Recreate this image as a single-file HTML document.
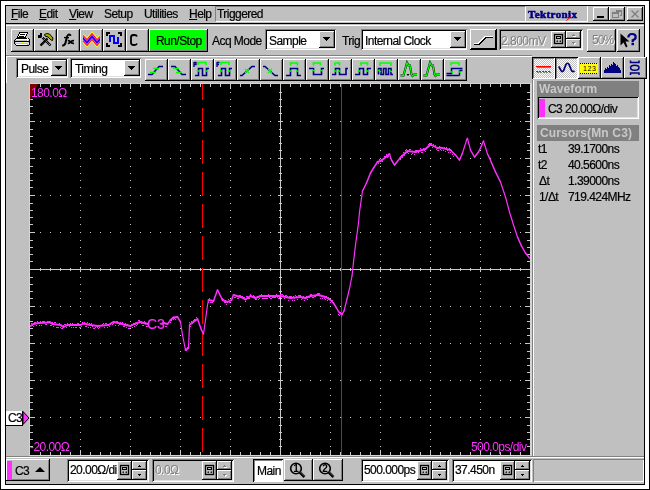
<!DOCTYPE html><html><head><meta charset="utf-8"><style>
html,body{margin:0;padding:0;}
body{width:650px;height:490px;position:relative;overflow:hidden;background:#fff;font-family:"Liberation Sans", sans-serif;}
.a{position:absolute;box-sizing:border-box;}
.t{white-space:nowrap;line-height:1;will-change:transform;-webkit-text-stroke:0.2px currentColor;}
.rb{box-shadow:inset -1px -1px #000, inset 1px 1px #fff, inset -2px -2px #808080;}
.rb2{box-shadow:inset -1px -1px #000, inset 1px 1px #fff, inset -2px -2px #000;}
.pb{box-shadow:inset 1px 1px #000, inset -1px -1px #fff, inset 2px 2px #808080;}
.sk{box-shadow:inset 1px 1px #808080, inset -1px -1px #fff, inset 2px 2px #000, inset -2px -2px #dfdfdf;}
.sk1{box-shadow:inset 1px 1px #808080, inset -1px -1px #fff;}
svg{overflow:visible}
</style></head><body>

<div class="a" style="left:0px;top:0px;width:650px;height:490px;background:#fff;border:1px solid #000;"></div>
<div class="a" style="left:5px;top:5px;width:640px;height:480px;background:#c0c0c0;border:1px solid #000;"></div>
<div class="a t" style="left:11px;top:8px;font-size:12px;color:#000;font-weight:normal;font-family:'Liberation Sans', sans-serif;letter-spacing:-0.55px;"><u>F</u>ile</div>
<div class="a t" style="left:39px;top:8px;font-size:12px;color:#000;font-weight:normal;font-family:'Liberation Sans', sans-serif;letter-spacing:-0.55px;"><u>E</u>dit</div>
<div class="a t" style="left:69px;top:8px;font-size:12px;color:#000;font-weight:normal;font-family:'Liberation Sans', sans-serif;letter-spacing:-0.55px;"><u>V</u>iew</div>
<div class="a t" style="left:104px;top:8px;font-size:12px;color:#000;font-weight:normal;font-family:'Liberation Sans', sans-serif;letter-spacing:-0.55px;">Setup</div>
<div class="a t" style="left:144px;top:8px;font-size:12px;color:#000;font-weight:normal;font-family:'Liberation Sans', sans-serif;letter-spacing:-0.55px;">Utilities</div>
<div class="a t" style="left:189px;top:8px;font-size:12px;color:#000;font-weight:normal;font-family:'Liberation Sans', sans-serif;letter-spacing:-0.55px;"><u>H</u>elp</div>
<div class="a" style="left:215px;top:6px;width:311px;height:16px;background:#c0c0c0;border-top:1px solid #808080;border-left:1px solid #808080;border-right:1px solid #fff;border-bottom:1px solid #fff;"></div>
<div class="a t" style="left:217px;top:8px;font-size:12px;color:#000;font-weight:normal;font-family:'Liberation Sans', sans-serif;letter-spacing:-0.55px;">Triggered</div>
<div class="a" style="left:526px;top:6px;width:62px;height:16px;background:#c0c0c0;border-right:1px solid #fff;border-bottom:1px solid #fff;"></div>
<div class="a t" style="left:528px;top:9px;font-size:11px;color:#000080;font-weight:bold;font-family:'Liberation Serif', serif;letter-spacing:0.4px;-webkit-text-stroke:0.6px #000080;">Tektronix</div>
<svg class="a" style="left:0px;top:0px" width="650" height="30"><line x1="566.5" y1="20.5" x2="571" y2="16.5" stroke="#f00" stroke-width="1"/></svg>
<div class="a rb" style="left:593px;top:7px;width:16px;height:14px;background:#c0c0c0"></div>
<div class="a" style="left:597px;top:16px;width:7px;height:2px;background:#000;"></div>
<div class="a rb" style="left:609px;top:7px;width:16px;height:14px;background:#c0c0c0"></div>
<div class="a rb" style="left:627px;top:7px;width:16px;height:14px;background:#c0c0c0"></div>
<svg class="a" style="left:609px;top:7px" width="16" height="14" shape-rendering="crispEdges"><path d="M6.5 3.5h6v5h-2M6.5 4.5h6" stroke="#808080" fill="none"/><rect x="3.5" y="5.5" width="6" height="5" stroke="#808080" fill="none"/><line x1="3.5" y1="6.5" x2="9.5" y2="6.5" stroke="#808080"/><path d="M7 3.5V5" stroke="#808080"/></svg>
<svg class="a" style="left:627px;top:7px" width="16" height="14"><path d="M4.5 3.5L11.5 10.5M11.5 3.5L4.5 10.5" stroke="#808080" stroke-width="1.4" fill="none"/></svg>
<div class="a" style="left:6px;top:23px;width:638px;height:1px;background:#000;"></div>
<div class="a" style="left:6px;top:25px;width:638px;height:1px;background:#fff;"></div>
<div class="a" style="left:6px;top:26px;width:1px;height:29px;background:#dfdfdf;"></div>
<div class="a" style="left:6px;top:55px;width:526px;height:1px;background:#808080;"></div>
<div class="a" style="left:6px;top:56px;width:526px;height:1px;background:#fff;"></div>
<div class="a" style="left:6px;top:57px;width:1px;height:26px;background:#fff;"></div>
<div class="a rb" style="left:11px;top:29px;width:23px;height:23px;background:#c0c0c0"></div>
<div class="a rb" style="left:34px;top:29px;width:23px;height:23px;background:#c0c0c0"></div>
<div class="a rb" style="left:57px;top:29px;width:23px;height:23px;background:#c0c0c0"></div>
<div class="a rb" style="left:80px;top:29px;width:23px;height:23px;background:#c0c0c0"></div>
<div class="a rb" style="left:103px;top:29px;width:23px;height:23px;background:#c0c0c0"></div>
<div class="a rb" style="left:126px;top:29px;width:23px;height:23px;background:#c0c0c0"></div>
<div class="a rb" style="left:149px;top:29px;width:59px;height:23px;background:#00ff00"></div>
<div class="a t" style="left:156px;top:35px;font-size:12px;color:#000;font-weight:normal;font-family:'Liberation Sans', sans-serif;letter-spacing:-0.55px;">Run/Stop</div>
<div class="a t" style="left:212px;top:35px;font-size:12px;color:#000;font-weight:normal;font-family:'Liberation Sans', sans-serif;letter-spacing:-0.55px;">Acq Mode</div>
<div class="a sk" style="left:265px;top:29px;width:71px;height:21px;background:#fff"></div>
<div class="a t" style="left:269px;top:35px;font-size:12px;color:#000;font-weight:normal;font-family:'Liberation Sans', sans-serif;letter-spacing:-0.55px;">Sample</div>
<div class="a rb" style="left:319px;top:31px;width:16px;height:17px;background:#c0c0c0"></div>
<svg class="a" style="left:323px;top:37px" width="7" height="4" shape-rendering="crispEdges"><path d="M0 0H7V1H6V2H5V3H4V4H3V3H2V2H1V1H0Z" fill="#000"/></svg>
<div class="a t" style="left:342px;top:35px;font-size:12px;color:#000;font-weight:normal;font-family:'Liberation Sans', sans-serif;letter-spacing:-0.55px;">Trig</div>
<div class="a sk" style="left:361px;top:29px;width:106px;height:21px;background:#fff"></div>
<div class="a t" style="left:365px;top:35px;font-size:12px;color:#000;font-weight:normal;font-family:'Liberation Sans', sans-serif;letter-spacing:-0.55px;">Internal Clock</div>
<div class="a rb" style="left:450px;top:31px;width:16px;height:17px;background:#c0c0c0"></div>
<svg class="a" style="left:454px;top:37px" width="7" height="4" shape-rendering="crispEdges"><path d="M0 0H7V1H6V2H5V3H4V4H3V3H2V2H1V1H0Z" fill="#000"/></svg>
<div class="a rb2" style="left:470px;top:29px;width:27px;height:21px;background:#c0c0c0"></div>
<div class="a sk" style="left:499px;top:29px;width:84px;height:21px;background:#c0c0c0"></div>
<div class="a t" style="left:501px;top:35px;font-size:12px;color:#808080;font-weight:normal;font-family:'Liberation Sans', sans-serif;letter-spacing:-0.5px;text-shadow:1px 1px #fff;-webkit-text-stroke:0;">2.800mV</div>
<div class="a rb" style="left:551px;top:31px;width:15px;height:17px;background:#c0c0c0"></div>
<div class="a rb" style="left:566px;top:31px;width:15px;height:8px;background:#c0c0c0"></div>
<div class="a rb" style="left:566px;top:39px;width:15px;height:9px;background:#c0c0c0"></div>
<div class="a rb" style="left:587px;top:29px;width:29px;height:23px;background:#c0c0c0"></div>
<div class="a t" style="left:592px;top:34px;font-size:12px;color:#808080;font-weight:normal;font-family:'Liberation Sans', sans-serif;letter-spacing:-0.9px;text-shadow:1px 1px #fff;-webkit-text-stroke:0;">50%</div>
<div class="a rb" style="left:617px;top:29px;width:23px;height:23px;background:#c0c0c0"></div>
<div class="a sk" style="left:16px;top:58px;width:52px;height:20px;background:#fff"></div>
<div class="a t" style="left:21px;top:63px;font-size:12px;color:#000;font-weight:normal;font-family:'Liberation Sans', sans-serif;letter-spacing:-0.55px;">Pulse</div>
<div class="a rb" style="left:51px;top:60px;width:16px;height:16px;background:#c0c0c0"></div>
<svg class="a" style="left:55px;top:66px" width="7" height="4" shape-rendering="crispEdges"><path d="M0 0H7V1H6V2H5V3H4V4H3V3H2V2H1V1H0Z" fill="#000"/></svg>
<div class="a sk" style="left:70px;top:58px;width:71px;height:20px;background:#fff"></div>
<div class="a t" style="left:75px;top:63px;font-size:12px;color:#000;font-weight:normal;font-family:'Liberation Sans', sans-serif;letter-spacing:-0.55px;">Timing</div>
<div class="a rb" style="left:124px;top:60px;width:16px;height:16px;background:#c0c0c0"></div>
<svg class="a" style="left:128px;top:66px" width="7" height="4" shape-rendering="crispEdges"><path d="M0 0H7V1H6V2H5V3H4V4H3V3H2V2H1V1H0Z" fill="#000"/></svg>
<div class="a rb" style="left:145px;top:59px;width:23px;height:22px;background:#c0c0c0"></div>
<div class="a rb" style="left:168px;top:59px;width:23px;height:22px;background:#c0c0c0"></div>
<div class="a rb" style="left:191px;top:59px;width:23px;height:22px;background:#c0c0c0"></div>
<div class="a rb" style="left:214px;top:59px;width:23px;height:22px;background:#c0c0c0"></div>
<div class="a rb" style="left:237px;top:59px;width:23px;height:22px;background:#c0c0c0"></div>
<div class="a rb" style="left:260px;top:59px;width:23px;height:22px;background:#c0c0c0"></div>
<div class="a rb" style="left:283px;top:59px;width:23px;height:22px;background:#c0c0c0"></div>
<div class="a rb" style="left:306px;top:59px;width:23px;height:22px;background:#c0c0c0"></div>
<div class="a rb" style="left:329px;top:59px;width:23px;height:22px;background:#c0c0c0"></div>
<div class="a rb" style="left:352px;top:59px;width:23px;height:22px;background:#c0c0c0"></div>
<div class="a rb" style="left:375px;top:59px;width:23px;height:22px;background:#c0c0c0"></div>
<div class="a rb" style="left:398px;top:59px;width:23px;height:22px;background:#c0c0c0"></div>
<div class="a rb" style="left:421px;top:59px;width:23px;height:22px;background:#c0c0c0"></div>
<div class="a rb" style="left:444px;top:59px;width:23px;height:22px;background:#c0c0c0"></div>
<div class="a pb" style="left:532px;top:57px;width:23px;height:22px;background:repeating-conic-gradient(#fff 0% 25%, #c0c0c0 0% 50%) 0 0/2px 2px"></div>
<div class="a pb" style="left:555px;top:57px;width:23px;height:22px;background:repeating-conic-gradient(#fff 0% 25%, #c0c0c0 0% 50%) 0 0/2px 2px"></div>
<div class="a rb" style="left:578px;top:57px;width:23px;height:22px;background:#c0c0c0"></div>
<div class="a rb" style="left:601px;top:57px;width:23px;height:22px;background:#c0c0c0"></div>
<div class="a rb" style="left:624px;top:57px;width:23px;height:22px;background:#c0c0c0"></div>
<svg class="a" style="left:0;top:0" width="650" height="490" shape-rendering="crispEdges"><rect x="29" y="83" width="503" height="373" fill="#d4d4d4"/><rect x="30" y="84" width="500" height="371" fill="#000"/><path d="M80 92h1v1h-1zM80 99h1v1h-1zM80 106h1v1h-1zM80 113h1v1h-1zM80 129h1v1h-1zM80 136h1v1h-1zM80 143h1v1h-1zM80 150h1v1h-1zM80 166h1v1h-1zM80 173h1v1h-1zM80 180h1v1h-1zM80 187h1v1h-1zM80 203h1v1h-1zM80 210h1v1h-1zM80 217h1v1h-1zM80 224h1v1h-1zM80 240h1v1h-1zM80 247h1v1h-1zM80 254h1v1h-1zM80 261h1v1h-1zM80 277h1v1h-1zM80 284h1v1h-1zM80 291h1v1h-1zM80 298h1v1h-1zM80 314h1v1h-1zM80 321h1v1h-1zM80 328h1v1h-1zM80 335h1v1h-1zM80 351h1v1h-1zM80 358h1v1h-1zM80 365h1v1h-1zM80 372h1v1h-1zM80 388h1v1h-1zM80 395h1v1h-1zM80 402h1v1h-1zM80 409h1v1h-1zM80 425h1v1h-1zM80 432h1v1h-1zM80 439h1v1h-1zM80 446h1v1h-1zM80 121h1v1h-1zM80 158h1v1h-1zM80 195h1v1h-1zM80 232h1v1h-1zM80 269h1v1h-1zM80 306h1v1h-1zM80 343h1v1h-1zM80 380h1v1h-1zM80 417h1v1h-1zM130 92h1v1h-1zM130 99h1v1h-1zM130 106h1v1h-1zM130 113h1v1h-1zM130 129h1v1h-1zM130 136h1v1h-1zM130 143h1v1h-1zM130 150h1v1h-1zM130 166h1v1h-1zM130 173h1v1h-1zM130 180h1v1h-1zM130 187h1v1h-1zM130 203h1v1h-1zM130 210h1v1h-1zM130 217h1v1h-1zM130 224h1v1h-1zM130 240h1v1h-1zM130 247h1v1h-1zM130 254h1v1h-1zM130 261h1v1h-1zM130 277h1v1h-1zM130 284h1v1h-1zM130 291h1v1h-1zM130 298h1v1h-1zM130 314h1v1h-1zM130 321h1v1h-1zM130 328h1v1h-1zM130 335h1v1h-1zM130 351h1v1h-1zM130 358h1v1h-1zM130 365h1v1h-1zM130 372h1v1h-1zM130 388h1v1h-1zM130 395h1v1h-1zM130 402h1v1h-1zM130 409h1v1h-1zM130 425h1v1h-1zM130 432h1v1h-1zM130 439h1v1h-1zM130 446h1v1h-1zM130 121h1v1h-1zM130 158h1v1h-1zM130 195h1v1h-1zM130 232h1v1h-1zM130 269h1v1h-1zM130 306h1v1h-1zM130 343h1v1h-1zM130 380h1v1h-1zM130 417h1v1h-1zM180 92h1v1h-1zM180 99h1v1h-1zM180 106h1v1h-1zM180 113h1v1h-1zM180 129h1v1h-1zM180 136h1v1h-1zM180 143h1v1h-1zM180 150h1v1h-1zM180 166h1v1h-1zM180 173h1v1h-1zM180 180h1v1h-1zM180 187h1v1h-1zM180 203h1v1h-1zM180 210h1v1h-1zM180 217h1v1h-1zM180 224h1v1h-1zM180 240h1v1h-1zM180 247h1v1h-1zM180 254h1v1h-1zM180 261h1v1h-1zM180 277h1v1h-1zM180 284h1v1h-1zM180 291h1v1h-1zM180 298h1v1h-1zM180 314h1v1h-1zM180 321h1v1h-1zM180 328h1v1h-1zM180 335h1v1h-1zM180 351h1v1h-1zM180 358h1v1h-1zM180 365h1v1h-1zM180 372h1v1h-1zM180 388h1v1h-1zM180 395h1v1h-1zM180 402h1v1h-1zM180 409h1v1h-1zM180 425h1v1h-1zM180 432h1v1h-1zM180 439h1v1h-1zM180 446h1v1h-1zM180 121h1v1h-1zM180 158h1v1h-1zM180 195h1v1h-1zM180 232h1v1h-1zM180 269h1v1h-1zM180 306h1v1h-1zM180 343h1v1h-1zM180 380h1v1h-1zM180 417h1v1h-1zM230 92h1v1h-1zM230 99h1v1h-1zM230 106h1v1h-1zM230 113h1v1h-1zM230 129h1v1h-1zM230 136h1v1h-1zM230 143h1v1h-1zM230 150h1v1h-1zM230 166h1v1h-1zM230 173h1v1h-1zM230 180h1v1h-1zM230 187h1v1h-1zM230 203h1v1h-1zM230 210h1v1h-1zM230 217h1v1h-1zM230 224h1v1h-1zM230 240h1v1h-1zM230 247h1v1h-1zM230 254h1v1h-1zM230 261h1v1h-1zM230 277h1v1h-1zM230 284h1v1h-1zM230 291h1v1h-1zM230 298h1v1h-1zM230 314h1v1h-1zM230 321h1v1h-1zM230 328h1v1h-1zM230 335h1v1h-1zM230 351h1v1h-1zM230 358h1v1h-1zM230 365h1v1h-1zM230 372h1v1h-1zM230 388h1v1h-1zM230 395h1v1h-1zM230 402h1v1h-1zM230 409h1v1h-1zM230 425h1v1h-1zM230 432h1v1h-1zM230 439h1v1h-1zM230 446h1v1h-1zM230 121h1v1h-1zM230 158h1v1h-1zM230 195h1v1h-1zM230 232h1v1h-1zM230 269h1v1h-1zM230 306h1v1h-1zM230 343h1v1h-1zM230 380h1v1h-1zM230 417h1v1h-1zM330 92h1v1h-1zM330 99h1v1h-1zM330 106h1v1h-1zM330 113h1v1h-1zM330 129h1v1h-1zM330 136h1v1h-1zM330 143h1v1h-1zM330 150h1v1h-1zM330 166h1v1h-1zM330 173h1v1h-1zM330 180h1v1h-1zM330 187h1v1h-1zM330 203h1v1h-1zM330 210h1v1h-1zM330 217h1v1h-1zM330 224h1v1h-1zM330 240h1v1h-1zM330 247h1v1h-1zM330 254h1v1h-1zM330 261h1v1h-1zM330 277h1v1h-1zM330 284h1v1h-1zM330 291h1v1h-1zM330 298h1v1h-1zM330 314h1v1h-1zM330 321h1v1h-1zM330 328h1v1h-1zM330 335h1v1h-1zM330 351h1v1h-1zM330 358h1v1h-1zM330 365h1v1h-1zM330 372h1v1h-1zM330 388h1v1h-1zM330 395h1v1h-1zM330 402h1v1h-1zM330 409h1v1h-1zM330 425h1v1h-1zM330 432h1v1h-1zM330 439h1v1h-1zM330 446h1v1h-1zM330 121h1v1h-1zM330 158h1v1h-1zM330 195h1v1h-1zM330 232h1v1h-1zM330 269h1v1h-1zM330 306h1v1h-1zM330 343h1v1h-1zM330 380h1v1h-1zM330 417h1v1h-1zM380 92h1v1h-1zM380 99h1v1h-1zM380 106h1v1h-1zM380 113h1v1h-1zM380 129h1v1h-1zM380 136h1v1h-1zM380 143h1v1h-1zM380 150h1v1h-1zM380 166h1v1h-1zM380 173h1v1h-1zM380 180h1v1h-1zM380 187h1v1h-1zM380 203h1v1h-1zM380 210h1v1h-1zM380 217h1v1h-1zM380 224h1v1h-1zM380 240h1v1h-1zM380 247h1v1h-1zM380 254h1v1h-1zM380 261h1v1h-1zM380 277h1v1h-1zM380 284h1v1h-1zM380 291h1v1h-1zM380 298h1v1h-1zM380 314h1v1h-1zM380 321h1v1h-1zM380 328h1v1h-1zM380 335h1v1h-1zM380 351h1v1h-1zM380 358h1v1h-1zM380 365h1v1h-1zM380 372h1v1h-1zM380 388h1v1h-1zM380 395h1v1h-1zM380 402h1v1h-1zM380 409h1v1h-1zM380 425h1v1h-1zM380 432h1v1h-1zM380 439h1v1h-1zM380 446h1v1h-1zM380 121h1v1h-1zM380 158h1v1h-1zM380 195h1v1h-1zM380 232h1v1h-1zM380 269h1v1h-1zM380 306h1v1h-1zM380 343h1v1h-1zM380 380h1v1h-1zM380 417h1v1h-1zM430 92h1v1h-1zM430 99h1v1h-1zM430 106h1v1h-1zM430 113h1v1h-1zM430 129h1v1h-1zM430 136h1v1h-1zM430 143h1v1h-1zM430 150h1v1h-1zM430 166h1v1h-1zM430 173h1v1h-1zM430 180h1v1h-1zM430 187h1v1h-1zM430 203h1v1h-1zM430 210h1v1h-1zM430 217h1v1h-1zM430 224h1v1h-1zM430 240h1v1h-1zM430 247h1v1h-1zM430 254h1v1h-1zM430 261h1v1h-1zM430 277h1v1h-1zM430 284h1v1h-1zM430 291h1v1h-1zM430 298h1v1h-1zM430 314h1v1h-1zM430 321h1v1h-1zM430 328h1v1h-1zM430 335h1v1h-1zM430 351h1v1h-1zM430 358h1v1h-1zM430 365h1v1h-1zM430 372h1v1h-1zM430 388h1v1h-1zM430 395h1v1h-1zM430 402h1v1h-1zM430 409h1v1h-1zM430 425h1v1h-1zM430 432h1v1h-1zM430 439h1v1h-1zM430 446h1v1h-1zM430 121h1v1h-1zM430 158h1v1h-1zM430 195h1v1h-1zM430 232h1v1h-1zM430 269h1v1h-1zM430 306h1v1h-1zM430 343h1v1h-1zM430 380h1v1h-1zM430 417h1v1h-1zM480 92h1v1h-1zM480 99h1v1h-1zM480 106h1v1h-1zM480 113h1v1h-1zM480 129h1v1h-1zM480 136h1v1h-1zM480 143h1v1h-1zM480 150h1v1h-1zM480 166h1v1h-1zM480 173h1v1h-1zM480 180h1v1h-1zM480 187h1v1h-1zM480 203h1v1h-1zM480 210h1v1h-1zM480 217h1v1h-1zM480 224h1v1h-1zM480 240h1v1h-1zM480 247h1v1h-1zM480 254h1v1h-1zM480 261h1v1h-1zM480 277h1v1h-1zM480 284h1v1h-1zM480 291h1v1h-1zM480 298h1v1h-1zM480 314h1v1h-1zM480 321h1v1h-1zM480 328h1v1h-1zM480 335h1v1h-1zM480 351h1v1h-1zM480 358h1v1h-1zM480 365h1v1h-1zM480 372h1v1h-1zM480 388h1v1h-1zM480 395h1v1h-1zM480 402h1v1h-1zM480 409h1v1h-1zM480 425h1v1h-1zM480 432h1v1h-1zM480 439h1v1h-1zM480 446h1v1h-1zM480 121h1v1h-1zM480 158h1v1h-1zM480 195h1v1h-1zM480 232h1v1h-1zM480 269h1v1h-1zM480 306h1v1h-1zM480 343h1v1h-1zM480 380h1v1h-1zM480 417h1v1h-1zM40 121h1v1h-1zM50 121h1v1h-1zM60 121h1v1h-1zM70 121h1v1h-1zM90 121h1v1h-1zM100 121h1v1h-1zM110 121h1v1h-1zM120 121h1v1h-1zM140 121h1v1h-1zM150 121h1v1h-1zM160 121h1v1h-1zM170 121h1v1h-1zM190 121h1v1h-1zM200 121h1v1h-1zM210 121h1v1h-1zM220 121h1v1h-1zM240 121h1v1h-1zM250 121h1v1h-1zM260 121h1v1h-1zM270 121h1v1h-1zM290 121h1v1h-1zM300 121h1v1h-1zM310 121h1v1h-1zM320 121h1v1h-1zM340 121h1v1h-1zM350 121h1v1h-1zM360 121h1v1h-1zM370 121h1v1h-1zM390 121h1v1h-1zM400 121h1v1h-1zM410 121h1v1h-1zM420 121h1v1h-1zM440 121h1v1h-1zM450 121h1v1h-1zM460 121h1v1h-1zM470 121h1v1h-1zM490 121h1v1h-1zM500 121h1v1h-1zM510 121h1v1h-1zM520 121h1v1h-1zM80 121h1v1h-1zM130 121h1v1h-1zM180 121h1v1h-1zM230 121h1v1h-1zM280 121h1v1h-1zM330 121h1v1h-1zM380 121h1v1h-1zM430 121h1v1h-1zM480 121h1v1h-1zM40 158h1v1h-1zM50 158h1v1h-1zM60 158h1v1h-1zM70 158h1v1h-1zM90 158h1v1h-1zM100 158h1v1h-1zM110 158h1v1h-1zM120 158h1v1h-1zM140 158h1v1h-1zM150 158h1v1h-1zM160 158h1v1h-1zM170 158h1v1h-1zM190 158h1v1h-1zM200 158h1v1h-1zM210 158h1v1h-1zM220 158h1v1h-1zM240 158h1v1h-1zM250 158h1v1h-1zM260 158h1v1h-1zM270 158h1v1h-1zM290 158h1v1h-1zM300 158h1v1h-1zM310 158h1v1h-1zM320 158h1v1h-1zM340 158h1v1h-1zM350 158h1v1h-1zM360 158h1v1h-1zM370 158h1v1h-1zM390 158h1v1h-1zM400 158h1v1h-1zM410 158h1v1h-1zM420 158h1v1h-1zM440 158h1v1h-1zM450 158h1v1h-1zM460 158h1v1h-1zM470 158h1v1h-1zM490 158h1v1h-1zM500 158h1v1h-1zM510 158h1v1h-1zM520 158h1v1h-1zM80 158h1v1h-1zM130 158h1v1h-1zM180 158h1v1h-1zM230 158h1v1h-1zM280 158h1v1h-1zM330 158h1v1h-1zM380 158h1v1h-1zM430 158h1v1h-1zM480 158h1v1h-1zM40 195h1v1h-1zM50 195h1v1h-1zM60 195h1v1h-1zM70 195h1v1h-1zM90 195h1v1h-1zM100 195h1v1h-1zM110 195h1v1h-1zM120 195h1v1h-1zM140 195h1v1h-1zM150 195h1v1h-1zM160 195h1v1h-1zM170 195h1v1h-1zM190 195h1v1h-1zM200 195h1v1h-1zM210 195h1v1h-1zM220 195h1v1h-1zM240 195h1v1h-1zM250 195h1v1h-1zM260 195h1v1h-1zM270 195h1v1h-1zM290 195h1v1h-1zM300 195h1v1h-1zM310 195h1v1h-1zM320 195h1v1h-1zM340 195h1v1h-1zM350 195h1v1h-1zM360 195h1v1h-1zM370 195h1v1h-1zM390 195h1v1h-1zM400 195h1v1h-1zM410 195h1v1h-1zM420 195h1v1h-1zM440 195h1v1h-1zM450 195h1v1h-1zM460 195h1v1h-1zM470 195h1v1h-1zM490 195h1v1h-1zM500 195h1v1h-1zM510 195h1v1h-1zM520 195h1v1h-1zM80 195h1v1h-1zM130 195h1v1h-1zM180 195h1v1h-1zM230 195h1v1h-1zM280 195h1v1h-1zM330 195h1v1h-1zM380 195h1v1h-1zM430 195h1v1h-1zM480 195h1v1h-1zM40 232h1v1h-1zM50 232h1v1h-1zM60 232h1v1h-1zM70 232h1v1h-1zM90 232h1v1h-1zM100 232h1v1h-1zM110 232h1v1h-1zM120 232h1v1h-1zM140 232h1v1h-1zM150 232h1v1h-1zM160 232h1v1h-1zM170 232h1v1h-1zM190 232h1v1h-1zM200 232h1v1h-1zM210 232h1v1h-1zM220 232h1v1h-1zM240 232h1v1h-1zM250 232h1v1h-1zM260 232h1v1h-1zM270 232h1v1h-1zM290 232h1v1h-1zM300 232h1v1h-1zM310 232h1v1h-1zM320 232h1v1h-1zM340 232h1v1h-1zM350 232h1v1h-1zM360 232h1v1h-1zM370 232h1v1h-1zM390 232h1v1h-1zM400 232h1v1h-1zM410 232h1v1h-1zM420 232h1v1h-1zM440 232h1v1h-1zM450 232h1v1h-1zM460 232h1v1h-1zM470 232h1v1h-1zM490 232h1v1h-1zM500 232h1v1h-1zM510 232h1v1h-1zM520 232h1v1h-1zM80 232h1v1h-1zM130 232h1v1h-1zM180 232h1v1h-1zM230 232h1v1h-1zM280 232h1v1h-1zM330 232h1v1h-1zM380 232h1v1h-1zM430 232h1v1h-1zM480 232h1v1h-1zM40 306h1v1h-1zM50 306h1v1h-1zM60 306h1v1h-1zM70 306h1v1h-1zM90 306h1v1h-1zM100 306h1v1h-1zM110 306h1v1h-1zM120 306h1v1h-1zM140 306h1v1h-1zM150 306h1v1h-1zM160 306h1v1h-1zM170 306h1v1h-1zM190 306h1v1h-1zM200 306h1v1h-1zM210 306h1v1h-1zM220 306h1v1h-1zM240 306h1v1h-1zM250 306h1v1h-1zM260 306h1v1h-1zM270 306h1v1h-1zM290 306h1v1h-1zM300 306h1v1h-1zM310 306h1v1h-1zM320 306h1v1h-1zM340 306h1v1h-1zM350 306h1v1h-1zM360 306h1v1h-1zM370 306h1v1h-1zM390 306h1v1h-1zM400 306h1v1h-1zM410 306h1v1h-1zM420 306h1v1h-1zM440 306h1v1h-1zM450 306h1v1h-1zM460 306h1v1h-1zM470 306h1v1h-1zM490 306h1v1h-1zM500 306h1v1h-1zM510 306h1v1h-1zM520 306h1v1h-1zM80 306h1v1h-1zM130 306h1v1h-1zM180 306h1v1h-1zM230 306h1v1h-1zM280 306h1v1h-1zM330 306h1v1h-1zM380 306h1v1h-1zM430 306h1v1h-1zM480 306h1v1h-1zM40 343h1v1h-1zM50 343h1v1h-1zM60 343h1v1h-1zM70 343h1v1h-1zM90 343h1v1h-1zM100 343h1v1h-1zM110 343h1v1h-1zM120 343h1v1h-1zM140 343h1v1h-1zM150 343h1v1h-1zM160 343h1v1h-1zM170 343h1v1h-1zM190 343h1v1h-1zM200 343h1v1h-1zM210 343h1v1h-1zM220 343h1v1h-1zM240 343h1v1h-1zM250 343h1v1h-1zM260 343h1v1h-1zM270 343h1v1h-1zM290 343h1v1h-1zM300 343h1v1h-1zM310 343h1v1h-1zM320 343h1v1h-1zM340 343h1v1h-1zM350 343h1v1h-1zM360 343h1v1h-1zM370 343h1v1h-1zM390 343h1v1h-1zM400 343h1v1h-1zM410 343h1v1h-1zM420 343h1v1h-1zM440 343h1v1h-1zM450 343h1v1h-1zM460 343h1v1h-1zM470 343h1v1h-1zM490 343h1v1h-1zM500 343h1v1h-1zM510 343h1v1h-1zM520 343h1v1h-1zM80 343h1v1h-1zM130 343h1v1h-1zM180 343h1v1h-1zM230 343h1v1h-1zM280 343h1v1h-1zM330 343h1v1h-1zM380 343h1v1h-1zM430 343h1v1h-1zM480 343h1v1h-1zM40 380h1v1h-1zM50 380h1v1h-1zM60 380h1v1h-1zM70 380h1v1h-1zM90 380h1v1h-1zM100 380h1v1h-1zM110 380h1v1h-1zM120 380h1v1h-1zM140 380h1v1h-1zM150 380h1v1h-1zM160 380h1v1h-1zM170 380h1v1h-1zM190 380h1v1h-1zM200 380h1v1h-1zM210 380h1v1h-1zM220 380h1v1h-1zM240 380h1v1h-1zM250 380h1v1h-1zM260 380h1v1h-1zM270 380h1v1h-1zM290 380h1v1h-1zM300 380h1v1h-1zM310 380h1v1h-1zM320 380h1v1h-1zM340 380h1v1h-1zM350 380h1v1h-1zM360 380h1v1h-1zM370 380h1v1h-1zM390 380h1v1h-1zM400 380h1v1h-1zM410 380h1v1h-1zM420 380h1v1h-1zM440 380h1v1h-1zM450 380h1v1h-1zM460 380h1v1h-1zM470 380h1v1h-1zM490 380h1v1h-1zM500 380h1v1h-1zM510 380h1v1h-1zM520 380h1v1h-1zM80 380h1v1h-1zM130 380h1v1h-1zM180 380h1v1h-1zM230 380h1v1h-1zM280 380h1v1h-1zM330 380h1v1h-1zM380 380h1v1h-1zM430 380h1v1h-1zM480 380h1v1h-1zM40 417h1v1h-1zM50 417h1v1h-1zM60 417h1v1h-1zM70 417h1v1h-1zM90 417h1v1h-1zM100 417h1v1h-1zM110 417h1v1h-1zM120 417h1v1h-1zM140 417h1v1h-1zM150 417h1v1h-1zM160 417h1v1h-1zM170 417h1v1h-1zM190 417h1v1h-1zM200 417h1v1h-1zM210 417h1v1h-1zM220 417h1v1h-1zM240 417h1v1h-1zM250 417h1v1h-1zM260 417h1v1h-1zM270 417h1v1h-1zM290 417h1v1h-1zM300 417h1v1h-1zM310 417h1v1h-1zM320 417h1v1h-1zM340 417h1v1h-1zM350 417h1v1h-1zM360 417h1v1h-1zM370 417h1v1h-1zM390 417h1v1h-1zM400 417h1v1h-1zM410 417h1v1h-1zM420 417h1v1h-1zM440 417h1v1h-1zM450 417h1v1h-1zM460 417h1v1h-1zM470 417h1v1h-1zM490 417h1v1h-1zM500 417h1v1h-1zM510 417h1v1h-1zM520 417h1v1h-1zM80 417h1v1h-1zM130 417h1v1h-1zM180 417h1v1h-1zM230 417h1v1h-1zM280 417h1v1h-1zM330 417h1v1h-1zM380 417h1v1h-1zM430 417h1v1h-1zM480 417h1v1h-1zM30 269h500v1h-500zM280 84h1v371h-1zM279 92h3v1h-3zM279 99h3v1h-3zM279 106h3v1h-3zM279 113h3v1h-3zM279 129h3v1h-3zM279 136h3v1h-3zM279 143h3v1h-3zM279 150h3v1h-3zM279 166h3v1h-3zM279 173h3v1h-3zM279 180h3v1h-3zM279 187h3v1h-3zM279 203h3v1h-3zM279 210h3v1h-3zM279 217h3v1h-3zM279 224h3v1h-3zM279 240h3v1h-3zM279 247h3v1h-3zM279 254h3v1h-3zM279 261h3v1h-3zM279 277h3v1h-3zM279 284h3v1h-3zM279 291h3v1h-3zM279 298h3v1h-3zM279 314h3v1h-3zM279 321h3v1h-3zM279 328h3v1h-3zM279 335h3v1h-3zM279 351h3v1h-3zM279 358h3v1h-3zM279 365h3v1h-3zM279 372h3v1h-3zM279 388h3v1h-3zM279 395h3v1h-3zM279 402h3v1h-3zM279 409h3v1h-3zM279 425h3v1h-3zM279 432h3v1h-3zM279 439h3v1h-3zM279 446h3v1h-3zM40 268h1v3h-1zM50 268h1v3h-1zM60 268h1v3h-1zM70 268h1v3h-1zM90 268h1v3h-1zM100 268h1v3h-1zM110 268h1v3h-1zM120 268h1v3h-1zM140 268h1v3h-1zM150 268h1v3h-1zM160 268h1v3h-1zM170 268h1v3h-1zM190 268h1v3h-1zM200 268h1v3h-1zM210 268h1v3h-1zM220 268h1v3h-1zM240 268h1v3h-1zM250 268h1v3h-1zM260 268h1v3h-1zM270 268h1v3h-1zM290 268h1v3h-1zM300 268h1v3h-1zM310 268h1v3h-1zM320 268h1v3h-1zM340 268h1v3h-1zM350 268h1v3h-1zM360 268h1v3h-1zM370 268h1v3h-1zM390 268h1v3h-1zM400 268h1v3h-1zM410 268h1v3h-1zM420 268h1v3h-1zM440 268h1v3h-1zM450 268h1v3h-1zM460 268h1v3h-1zM470 268h1v3h-1zM490 268h1v3h-1zM500 268h1v3h-1zM510 268h1v3h-1zM520 268h1v3h-1zM278 121h5v1h-5zM278 158h5v1h-5zM278 195h5v1h-5zM278 232h5v1h-5zM278 269h5v1h-5zM278 306h5v1h-5zM278 343h5v1h-5zM278 380h5v1h-5zM278 417h5v1h-5zM80 267h1v5h-1zM130 267h1v5h-1zM180 267h1v5h-1zM230 267h1v5h-1zM280 267h1v5h-1zM330 267h1v5h-1zM380 267h1v5h-1zM430 267h1v5h-1zM480 267h1v5h-1zM40 84h1v3h-1zM40 452h1v3h-1zM50 84h1v3h-1zM50 452h1v3h-1zM60 84h1v3h-1zM60 452h1v3h-1zM70 84h1v3h-1zM70 452h1v3h-1zM90 84h1v3h-1zM90 452h1v3h-1zM100 84h1v3h-1zM100 452h1v3h-1zM110 84h1v3h-1zM110 452h1v3h-1zM120 84h1v3h-1zM120 452h1v3h-1zM140 84h1v3h-1zM140 452h1v3h-1zM150 84h1v3h-1zM150 452h1v3h-1zM160 84h1v3h-1zM160 452h1v3h-1zM170 84h1v3h-1zM170 452h1v3h-1zM190 84h1v3h-1zM190 452h1v3h-1zM200 84h1v3h-1zM200 452h1v3h-1zM210 84h1v3h-1zM210 452h1v3h-1zM220 84h1v3h-1zM220 452h1v3h-1zM240 84h1v3h-1zM240 452h1v3h-1zM250 84h1v3h-1zM250 452h1v3h-1zM260 84h1v3h-1zM260 452h1v3h-1zM270 84h1v3h-1zM270 452h1v3h-1zM290 84h1v3h-1zM290 452h1v3h-1zM300 84h1v3h-1zM300 452h1v3h-1zM310 84h1v3h-1zM310 452h1v3h-1zM320 84h1v3h-1zM320 452h1v3h-1zM340 84h1v3h-1zM340 452h1v3h-1zM350 84h1v3h-1zM350 452h1v3h-1zM360 84h1v3h-1zM360 452h1v3h-1zM370 84h1v3h-1zM370 452h1v3h-1zM390 84h1v3h-1zM390 452h1v3h-1zM400 84h1v3h-1zM400 452h1v3h-1zM410 84h1v3h-1zM410 452h1v3h-1zM420 84h1v3h-1zM420 452h1v3h-1zM440 84h1v3h-1zM440 452h1v3h-1zM450 84h1v3h-1zM450 452h1v3h-1zM460 84h1v3h-1zM460 452h1v3h-1zM470 84h1v3h-1zM470 452h1v3h-1zM490 84h1v3h-1zM490 452h1v3h-1zM500 84h1v3h-1zM500 452h1v3h-1zM510 84h1v3h-1zM510 452h1v3h-1zM520 84h1v3h-1zM520 452h1v3h-1zM80 84h1v5h-1zM80 450h1v5h-1zM130 84h1v5h-1zM130 450h1v5h-1zM180 84h1v5h-1zM180 450h1v5h-1zM230 84h1v5h-1zM230 450h1v5h-1zM280 84h1v5h-1zM280 450h1v5h-1zM330 84h1v5h-1zM330 450h1v5h-1zM380 84h1v5h-1zM380 450h1v5h-1zM430 84h1v5h-1zM430 450h1v5h-1zM480 84h1v5h-1zM480 450h1v5h-1zM30 92h3v1h-3zM527 92h3v1h-3zM30 99h3v1h-3zM527 99h3v1h-3zM30 106h3v1h-3zM527 106h3v1h-3zM30 113h3v1h-3zM527 113h3v1h-3zM30 129h3v1h-3zM527 129h3v1h-3zM30 136h3v1h-3zM527 136h3v1h-3zM30 143h3v1h-3zM527 143h3v1h-3zM30 150h3v1h-3zM527 150h3v1h-3zM30 166h3v1h-3zM527 166h3v1h-3zM30 173h3v1h-3zM527 173h3v1h-3zM30 180h3v1h-3zM527 180h3v1h-3zM30 187h3v1h-3zM527 187h3v1h-3zM30 203h3v1h-3zM527 203h3v1h-3zM30 210h3v1h-3zM527 210h3v1h-3zM30 217h3v1h-3zM527 217h3v1h-3zM30 224h3v1h-3zM527 224h3v1h-3zM30 240h3v1h-3zM527 240h3v1h-3zM30 247h3v1h-3zM527 247h3v1h-3zM30 254h3v1h-3zM527 254h3v1h-3zM30 261h3v1h-3zM527 261h3v1h-3zM30 277h3v1h-3zM527 277h3v1h-3zM30 284h3v1h-3zM527 284h3v1h-3zM30 291h3v1h-3zM527 291h3v1h-3zM30 298h3v1h-3zM527 298h3v1h-3zM30 314h3v1h-3zM527 314h3v1h-3zM30 321h3v1h-3zM527 321h3v1h-3zM30 328h3v1h-3zM527 328h3v1h-3zM30 335h3v1h-3zM527 335h3v1h-3zM30 351h3v1h-3zM527 351h3v1h-3zM30 358h3v1h-3zM527 358h3v1h-3zM30 365h3v1h-3zM527 365h3v1h-3zM30 372h3v1h-3zM527 372h3v1h-3zM30 388h3v1h-3zM527 388h3v1h-3zM30 395h3v1h-3zM527 395h3v1h-3zM30 402h3v1h-3zM527 402h3v1h-3zM30 409h3v1h-3zM527 409h3v1h-3zM30 425h3v1h-3zM527 425h3v1h-3zM30 432h3v1h-3zM527 432h3v1h-3zM30 439h3v1h-3zM527 439h3v1h-3zM30 446h3v1h-3zM527 446h3v1h-3zM30 121h5v1h-5zM525 121h5v1h-5zM30 158h5v1h-5zM525 158h5v1h-5zM30 195h5v1h-5zM525 195h5v1h-5zM30 232h5v1h-5zM525 232h5v1h-5zM30 269h5v1h-5zM525 269h5v1h-5zM30 306h5v1h-5zM525 306h5v1h-5zM30 343h5v1h-5zM525 343h5v1h-5zM30 380h5v1h-5zM525 380h5v1h-5zM30 417h5v1h-5zM525 417h5v1h-5z" fill="#c8c8c8"/></svg>
<svg class="a" style="left:0;top:0" width="650" height="490"><defs><clipPath id="gc"><rect x="30" y="84" width="500" height="371"/></clipPath></defs><g clip-path="url(#gc)"><path d="M202.5 76V100M202.5 108V132M202.5 140V164M202.5 172V196M202.5 204V228M202.5 236V260M202.5 268V292M202.5 300V324M202.5 332V356M202.5 364V388M202.5 396V420M202.5 428V452" stroke="#f00" stroke-width="1"/><line x1="341.5" y1="84" x2="341.5" y2="455" stroke="#f00" stroke-width="1"/><g stroke="#ff30ff" stroke-linecap="round"><line x1="30.5" y1="326" x2="33.5" y2="324" stroke-width="1.9"/><line x1="33.5" y1="324" x2="38.5" y2="323" stroke-width="1.9"/><line x1="38.5" y1="323" x2="50.5" y2="322.5" stroke-width="1.9"/><line x1="50.5" y1="322.5" x2="52.5" y2="324" stroke-width="1.9"/><line x1="52.5" y1="324" x2="60.5" y2="325" stroke-width="1.9"/><line x1="60.5" y1="325" x2="63.5" y2="327" stroke-width="1.9"/><line x1="63.5" y1="327" x2="67.5" y2="325" stroke-width="1.9"/><line x1="67.5" y1="325" x2="75.5" y2="325" stroke-width="1.9"/><line x1="75.5" y1="325" x2="80.5" y2="325" stroke-width="1.9"/><line x1="80.5" y1="325" x2="83.5" y2="323.5" stroke-width="1.9"/><line x1="83.5" y1="323.5" x2="90.5" y2="325" stroke-width="1.9"/><line x1="90.5" y1="325" x2="97.5" y2="326" stroke-width="1.9"/><line x1="97.5" y1="326" x2="108.5" y2="325" stroke-width="1.9"/><line x1="108.5" y1="325" x2="113.5" y2="322" stroke-width="1.9"/><line x1="113.5" y1="322" x2="120.5" y2="323.5" stroke-width="1.9"/><line x1="120.5" y1="323.5" x2="125.5" y2="325" stroke-width="1.9"/><line x1="125.5" y1="325" x2="130.5" y2="326" stroke-width="1.9"/><line x1="130.5" y1="326" x2="135.5" y2="323.5" stroke-width="1.9"/><line x1="135.5" y1="323.5" x2="140.5" y2="322" stroke-width="1.9"/><line x1="140.5" y1="322" x2="145.5" y2="323.5" stroke-width="1.9"/><line x1="145.5" y1="323.5" x2="148.5" y2="324" stroke-width="1.9"/><line x1="163.5" y1="323" x2="167.5" y2="324" stroke-width="1.9"/><line x1="167.5" y1="324" x2="170.5" y2="320" stroke-width="1.5"/><line x1="170.5" y1="320" x2="173.5" y2="317.5" stroke-width="1.9"/><line x1="173.5" y1="317.5" x2="177.5" y2="317" stroke-width="1.9"/><line x1="177.5" y1="317" x2="180.5" y2="322" stroke-width="1.5"/><line x1="180.5" y1="322" x2="182.5" y2="335" stroke-width="1.2"/><line x1="182.5" y1="335" x2="184.5" y2="345" stroke-width="1.2"/><line x1="184.5" y1="345" x2="185.5" y2="350" stroke-width="1.2"/><line x1="185.5" y1="350" x2="188.5" y2="348" stroke-width="1.9"/><line x1="188.5" y1="348" x2="189.5" y2="325" stroke-width="1.2"/><line x1="189.5" y1="325" x2="190.5" y2="324" stroke-width="1.5"/><line x1="190.5" y1="324" x2="197.5" y2="319" stroke-width="1.9"/><line x1="197.5" y1="319" x2="201.5" y2="330" stroke-width="1.5"/><line x1="201.5" y1="330" x2="203.5" y2="334" stroke-width="1.5"/><line x1="203.5" y1="334" x2="205.5" y2="320" stroke-width="1.2"/><line x1="205.5" y1="320" x2="207.5" y2="305" stroke-width="1.2"/><line x1="207.5" y1="305" x2="208.5" y2="300" stroke-width="1.2"/><line x1="208.5" y1="300" x2="213.5" y2="301" stroke-width="1.9"/><line x1="213.5" y1="301" x2="217.5" y2="290" stroke-width="1.5"/><line x1="217.5" y1="290" x2="222.5" y2="300" stroke-width="1.5"/><line x1="222.5" y1="300" x2="227.5" y2="302" stroke-width="1.9"/><line x1="227.5" y1="302" x2="231.5" y2="300" stroke-width="1.9"/><line x1="231.5" y1="300" x2="233.5" y2="295" stroke-width="1.5"/><line x1="233.5" y1="295" x2="240.5" y2="297" stroke-width="1.9"/><line x1="240.5" y1="297" x2="245.5" y2="299.5" stroke-width="1.9"/><line x1="245.5" y1="299.5" x2="250.5" y2="296" stroke-width="1.9"/><line x1="250.5" y1="296" x2="255.5" y2="298" stroke-width="1.9"/><line x1="255.5" y1="298" x2="260.5" y2="296" stroke-width="1.9"/><line x1="260.5" y1="296" x2="270.5" y2="296" stroke-width="1.9"/><line x1="270.5" y1="296" x2="280.5" y2="296" stroke-width="1.9"/><line x1="280.5" y1="296" x2="290.5" y2="298" stroke-width="1.9"/><line x1="290.5" y1="298" x2="300.5" y2="297" stroke-width="1.9"/><line x1="300.5" y1="297" x2="305.5" y2="298" stroke-width="1.9"/><line x1="305.5" y1="298" x2="310.5" y2="296" stroke-width="1.9"/><line x1="310.5" y1="296" x2="318.5" y2="295" stroke-width="1.9"/><line x1="318.5" y1="295" x2="325.5" y2="297" stroke-width="1.9"/><line x1="325.5" y1="297" x2="330.5" y2="300" stroke-width="1.9"/><line x1="330.5" y1="300" x2="333.5" y2="303" stroke-width="1.5"/><line x1="333.5" y1="303" x2="336.5" y2="308" stroke-width="1.5"/><line x1="336.5" y1="308" x2="338.5" y2="311.5" stroke-width="1.5"/><line x1="338.5" y1="311.5" x2="340.5" y2="313.5" stroke-width="1.5"/><line x1="340.5" y1="313.5" x2="342.0" y2="314.5" stroke-width="1.9"/><line x1="342.0" y1="314.5" x2="344.0" y2="311" stroke-width="1.5"/><line x1="344.0" y1="311" x2="347.0" y2="299" stroke-width="1.2"/><line x1="347.0" y1="299" x2="349.5" y2="288.5" stroke-width="1.2"/><line x1="349.5" y1="288.5" x2="352.0" y2="276" stroke-width="1.2"/><line x1="352.0" y1="276" x2="353.5" y2="262" stroke-width="1.2"/><line x1="353.5" y1="262" x2="355.5" y2="245" stroke-width="1.2"/><line x1="355.5" y1="245" x2="358.5" y2="223" stroke-width="1.2"/><line x1="358.5" y1="223" x2="359.5" y2="212" stroke-width="1.2"/><line x1="359.5" y1="212" x2="362.5" y2="191" stroke-width="1.2"/><line x1="362.5" y1="191" x2="366.5" y2="183" stroke-width="1.5"/><line x1="366.5" y1="183" x2="370.5" y2="173" stroke-width="1.5"/><line x1="370.5" y1="173" x2="373.5" y2="168" stroke-width="1.5"/><line x1="373.5" y1="168" x2="377.5" y2="162" stroke-width="1.5"/><line x1="377.5" y1="162" x2="381.5" y2="160.5" stroke-width="1.9"/><line x1="381.5" y1="160.5" x2="386.5" y2="156.5" stroke-width="1.9"/><line x1="386.5" y1="156.5" x2="389.5" y2="154" stroke-width="1.9"/><line x1="389.5" y1="154" x2="391.5" y2="160" stroke-width="1.2"/><line x1="391.5" y1="160" x2="394.5" y2="165" stroke-width="1.5"/><line x1="394.5" y1="165" x2="400.5" y2="157.5" stroke-width="1.5"/><line x1="400.5" y1="157.5" x2="407.5" y2="151" stroke-width="1.9"/><line x1="407.5" y1="151" x2="415.5" y2="152" stroke-width="1.9"/><line x1="415.5" y1="152" x2="425.5" y2="149" stroke-width="1.9"/><line x1="425.5" y1="149" x2="430.5" y2="144.5" stroke-width="1.9"/><line x1="430.5" y1="144.5" x2="437.5" y2="148" stroke-width="1.9"/><line x1="437.5" y1="148" x2="440.5" y2="147.6" stroke-width="1.9"/><line x1="440.5" y1="147.6" x2="450.5" y2="150" stroke-width="1.9"/><line x1="450.5" y1="150" x2="455.5" y2="155" stroke-width="1.5"/><line x1="455.5" y1="155" x2="459.5" y2="160" stroke-width="1.5"/><line x1="459.5" y1="160" x2="462.5" y2="153" stroke-width="1.5"/><line x1="462.5" y1="153" x2="466.5" y2="140.4" stroke-width="1.2"/><line x1="466.5" y1="140.4" x2="467.5" y2="138.4" stroke-width="1.5"/><line x1="467.5" y1="138.4" x2="470.5" y2="150" stroke-width="1.2"/><line x1="470.5" y1="150" x2="474.5" y2="157" stroke-width="1.5"/><line x1="474.5" y1="157" x2="478.5" y2="152" stroke-width="1.5"/><line x1="478.5" y1="152" x2="480.5" y2="148" stroke-width="1.5"/><line x1="480.5" y1="148" x2="483.5" y2="141" stroke-width="1.5"/><line x1="483.5" y1="141" x2="487.5" y2="154" stroke-width="1.2"/><line x1="487.5" y1="154" x2="489.5" y2="158" stroke-width="1.5"/><line x1="489.5" y1="158" x2="495.5" y2="172" stroke-width="1.5"/><line x1="495.5" y1="172" x2="500.5" y2="182" stroke-width="1.5"/><line x1="500.5" y1="182" x2="505.5" y2="197" stroke-width="1.2"/><line x1="505.5" y1="197" x2="509.5" y2="212" stroke-width="1.2"/><line x1="509.5" y1="212" x2="513.5" y2="225" stroke-width="1.2"/><line x1="513.5" y1="225" x2="517.5" y2="237" stroke-width="1.2"/><line x1="517.5" y1="237" x2="521.5" y2="246" stroke-width="1.5"/><line x1="521.5" y1="246" x2="525.5" y2="253" stroke-width="1.5"/><line x1="525.5" y1="253" x2="529.5" y2="258" stroke-width="1.5"/></g><path d="M30 325h1v1h-1zM31 323h1v1h-1zM32 325h1v1h-1zM33 326h1v1h-1zM34 322h1v1h-1zM35 322h1v1h-1zM36 325h1v1h-1zM37 321h1v1h-1zM38 322h1v1h-1zM39 325h1v1h-1zM40 321h1v1h-1zM41 325h1v1h-1zM42 321h1v1h-1zM43 321h1v1h-1zM44 321h1v1h-1zM45 324h1v1h-1zM46 324h1v1h-1zM47 321h1v1h-1zM48 321h1v1h-1zM49 321h1v1h-1zM50 325h1v1h-1zM51 325h1v1h-1zM52 322h1v1h-1zM53 326h1v1h-1zM54 322h1v1h-1zM55 322h1v1h-1zM56 327h1v1h-1zM57 327h1v1h-1zM58 327h1v1h-1zM59 323h1v1h-1zM60 327h1v1h-1zM61 328h1v1h-1zM62 328h1v1h-1zM63 325h1v1h-1zM64 324h1v1h-1zM65 324h1v1h-1zM66 327h1v1h-1zM67 323h1v1h-1zM68 324h1v1h-1zM69 326h1v1h-1zM70 323h1v1h-1zM71 327h1v1h-1zM72 323h1v1h-1zM73 327h1v1h-1zM74 324h1v1h-1zM75 327h1v1h-1zM76 327h1v1h-1zM77 323h1v1h-1zM78 323h1v1h-1zM79 327h1v1h-1zM80 327h1v1h-1zM81 326h1v1h-1zM82 322h1v1h-1zM83 323h1v1h-1zM84 322h1v1h-1zM85 326h1v1h-1zM86 326h1v1h-1zM87 322h1v1h-1zM88 327h1v1h-1zM89 323h1v1h-1zM90 327h1v1h-1zM91 323h1v1h-1zM92 326h1v1h-1zM93 328h1v1h-1zM94 328h1v1h-1zM95 327h1v1h-1zM96 325h1v1h-1zM97 327h1v1h-1zM98 328h1v1h-1zM99 327h1v1h-1zM100 325h1v1h-1zM101 325h1v1h-1zM102 324h1v1h-1zM103 323h1v1h-1zM104 327h1v1h-1zM105 323h1v1h-1zM106 323h1v1h-1zM107 327h1v1h-1zM108 324h1v1h-1zM109 326h1v1h-1zM110 324h1v1h-1zM111 322h1v1h-1zM112 324h1v1h-1zM113 323h1v1h-1zM114 321h1v1h-1zM115 325h1v1h-1zM116 321h1v1h-1zM117 321h1v1h-1zM118 325h1v1h-1zM119 324h1v1h-1zM120 322h1v1h-1zM121 323h1v1h-1zM122 322h1v1h-1zM123 326h1v1h-1zM124 326h1v1h-1zM125 323h1v1h-1zM126 327h1v1h-1zM127 324h1v1h-1zM128 328h1v1h-1zM129 328h1v1h-1zM130 325h1v1h-1zM131 324h1v1h-1zM132 327h1v1h-1zM133 323h1v1h-1zM134 326h1v1h-1zM135 324h1v1h-1zM136 325h1v1h-1zM137 324h1v1h-1zM138 320h1v1h-1zM139 320h1v1h-1zM140 321h1v1h-1zM141 323h1v1h-1zM142 325h1v1h-1zM143 325h1v1h-1zM144 321h1v1h-1zM145 322h1v1h-1zM146 326h1v1h-1zM147 326h1v1h-1zM164 322h1v1h-1zM165 326h1v1h-1zM166 326h1v1h-1zM170 322h1v1h-1zM171 320h1v1h-1zM172 317h1v1h-1zM173 319h1v1h-1zM174 318h1v1h-1zM175 319h1v1h-1zM176 316h1v1h-1zM185 348h1v1h-1zM186 350h1v1h-1zM187 347h1v1h-1zM189 322h1v1h-1zM190 326h1v1h-1zM191 321h1v1h-1zM192 323h1v1h-1zM193 320h1v1h-1zM194 319h1v1h-1zM195 319h1v1h-1zM196 317h1v1h-1zM208 302h1v1h-1zM209 298h1v1h-1zM210 302h1v1h-1zM211 302h1v1h-1zM212 302h1v1h-1zM222 298h1v1h-1zM223 299h1v1h-1zM224 302h1v1h-1zM225 302h1v1h-1zM226 304h1v1h-1zM227 301h1v1h-1zM228 299h1v1h-1zM229 302h1v1h-1zM230 302h1v1h-1zM233 294h1v1h-1zM234 297h1v1h-1zM235 297h1v1h-1zM236 295h1v1h-1zM237 298h1v1h-1zM238 298h1v1h-1zM239 295h1v1h-1zM240 295h1v1h-1zM241 296h1v1h-1zM242 296h1v1h-1zM243 297h1v1h-1zM244 297h1v1h-1zM245 301h1v1h-1zM246 296h1v1h-1zM247 296h1v1h-1zM248 298h1v1h-1zM249 298h1v1h-1zM250 294h1v1h-1zM251 296h1v1h-1zM252 296h1v1h-1zM253 295h1v1h-1zM254 296h1v1h-1zM255 299h1v1h-1zM256 299h1v1h-1zM257 296h1v1h-1zM258 299h1v1h-1zM259 298h1v1h-1zM260 295h1v1h-1zM261 294h1v1h-1zM262 298h1v1h-1zM263 298h1v1h-1zM264 298h1v1h-1zM265 298h1v1h-1zM266 298h1v1h-1zM267 298h1v1h-1zM268 294h1v1h-1zM269 297h1v1h-1zM270 298h1v1h-1zM271 298h1v1h-1zM272 297h1v1h-1zM273 297h1v1h-1zM274 297h1v1h-1zM275 297h1v1h-1zM276 294h1v1h-1zM277 297h1v1h-1zM278 298h1v1h-1zM279 297h1v1h-1zM280 294h1v1h-1zM281 294h1v1h-1zM282 294h1v1h-1zM283 295h1v1h-1zM284 298h1v1h-1zM285 295h1v1h-1zM286 295h1v1h-1zM287 296h1v1h-1zM288 300h1v1h-1zM289 296h1v1h-1zM290 296h1v1h-1zM291 296h1v1h-1zM292 300h1v1h-1zM293 296h1v1h-1zM294 300h1v1h-1zM295 295h1v1h-1zM296 296h1v1h-1zM297 299h1v1h-1zM298 295h1v1h-1zM299 295h1v1h-1zM300 295h1v1h-1zM301 299h1v1h-1zM302 298h1v1h-1zM303 296h1v1h-1zM304 300h1v1h-1zM305 297h1v1h-1zM306 296h1v1h-1zM307 299h1v1h-1zM308 296h1v1h-1zM309 297h1v1h-1zM310 294h1v1h-1zM311 294h1v1h-1zM312 297h1v1h-1zM313 297h1v1h-1zM314 296h1v1h-1zM315 296h1v1h-1zM316 294h1v1h-1zM317 293h1v1h-1zM318 293h1v1h-1zM319 293h1v1h-1zM320 298h1v1h-1zM321 295h1v1h-1zM322 298h1v1h-1zM323 296h1v1h-1zM324 298h1v1h-1zM325 299h1v1h-1zM326 296h1v1h-1zM327 300h1v1h-1zM328 297h1v1h-1zM329 298h1v1h-1zM330 302h1v1h-1zM331 300h1v1h-1zM332 300h1v1h-1zM338 314h1v1h-1zM339 315h1v1h-1zM340 312h1v1h-1zM341 316h1v1h-1zM377 161h1v1h-1zM378 163h1v1h-1zM379 159h1v1h-1zM380 163h1v1h-1zM381 159h1v1h-1zM382 161h1v1h-1zM383 158h1v1h-1zM384 156h1v1h-1zM385 156h1v1h-1zM386 154h1v1h-1zM387 157h1v1h-1zM388 156h1v1h-1zM400 159h1v1h-1zM401 155h1v1h-1zM402 157h1v1h-1zM403 152h1v1h-1zM404 155h1v1h-1zM405 150h1v1h-1zM406 149h1v1h-1zM407 152h1v1h-1zM408 153h1v1h-1zM409 149h1v1h-1zM410 149h1v1h-1zM411 154h1v1h-1zM412 153h1v1h-1zM413 151h1v1h-1zM414 154h1v1h-1zM415 150h1v1h-1zM416 150h1v1h-1zM417 150h1v1h-1zM418 152h1v1h-1zM419 150h1v1h-1zM420 148h1v1h-1zM421 152h1v1h-1zM422 152h1v1h-1zM423 148h1v1h-1zM424 150h1v1h-1zM425 151h1v1h-1zM426 147h1v1h-1zM427 146h1v1h-1zM428 144h1v1h-1zM429 143h1v1h-1zM430 143h1v1h-1zM431 143h1v1h-1zM432 147h1v1h-1zM433 144h1v1h-1zM434 146h1v1h-1zM435 145h1v1h-1zM436 149h1v1h-1zM437 150h1v1h-1zM438 150h1v1h-1zM439 146h1v1h-1zM440 149h1v1h-1zM441 150h1v1h-1zM442 147h1v1h-1zM443 150h1v1h-1zM444 147h1v1h-1zM445 151h1v1h-1zM446 147h1v1h-1zM447 150h1v1h-1zM448 152h1v1h-1zM449 148h1v1h-1zM450 152h1v1h-1zM451 150h1v1h-1zM452 154h1v1h-1zM453 156h1v1h-1zM454 154h1v1h-1z" fill="#ff30ff" shape-rendering="crispEdges"/><path d="M30 84H38L30 100Z" fill="#800000"/></g></svg>
<div class="a t" style="left:31px;top:87px;font-size:12px;color:#ff30ff;font-weight:normal;font-family:'Liberation Sans', sans-serif;letter-spacing:-0.55px;-webkit-text-stroke:0;">180.0&#937;</div>
<div class="a t" style="left:30px;top:441px;font-size:12px;color:#ff30ff;font-weight:normal;font-family:'Liberation Sans', sans-serif;letter-spacing:-0.55px;-webkit-text-stroke:0;">-20.00&#937;</div>
<div class="a t" style="left:471px;top:441px;font-size:12px;color:#ff30ff;font-weight:normal;font-family:'Liberation Sans', sans-serif;letter-spacing:-0.55px;-webkit-text-stroke:0;">500.0ps/div</div>
<div class="a t" style="left:147px;top:317px;font-size:14px;color:#ff30ff;font-weight:normal;font-family:'Liberation Sans', sans-serif;letter-spacing:0px;">C3</div>
<div class="a" style="left:6px;top:411px;width:17px;height:15px;background:#fff;border-right:1px solid #000;border-bottom:1px solid #000;"></div>
<div class="a t" style="left:8px;top:412px;font-size:12px;color:#000;font-weight:normal;font-family:'Liberation Sans', sans-serif;letter-spacing:-0.55px;">C3</div>
<svg class="a" style="left:0px;top:0px" width="650" height="490"><path d="M23 411.5L29 418L23 424.5Z" fill="#ff30ff" stroke="#000" stroke-width="1"/></svg>
<div class="a" style="left:532px;top:80px;width:1px;height:377px;background:#808080;"></div>
<div class="a" style="left:533px;top:80px;width:1px;height:377px;background:#fff;"></div>
<div class="a" style="left:537px;top:81px;width:102px;height:16px;background:#808080;"></div>
<div class="a t" style="left:539px;top:83px;font-size:12px;color:#c8c8c8;font-weight:bold;font-family:'Liberation Sans', sans-serif;letter-spacing:0.1px;-webkit-text-stroke:0;">Waveform</div>
<div class="a sk" style="left:537px;top:96px;width:102px;height:23px;background:#c0c0c0"></div>
<div class="a" style="left:539px;top:99px;width:6px;height:18px;background:#ff30ff;"></div>
<div class="a t" style="left:548px;top:103px;font-size:12px;color:#000;font-weight:normal;font-family:'Liberation Sans', sans-serif;letter-spacing:-0.55px;">C3 20.00&#937;/div</div>
<div class="a" style="left:537px;top:125px;width:102px;height:16px;background:#808080;"></div>
<div class="a t" style="left:540px;top:127px;font-size:12px;color:#c8c8c8;font-weight:bold;font-family:'Liberation Sans', sans-serif;letter-spacing:0.15px;-webkit-text-stroke:0;">Cursors(Mn C3)</div>
<div class="a t" style="left:538px;top:143px;font-size:12px;color:#000;font-weight:normal;font-family:'Liberation Sans', sans-serif;letter-spacing:-0.55px;">t1</div>
<div class="a t" style="left:568px;top:143px;font-size:12px;color:#000;font-weight:normal;font-family:'Liberation Sans', sans-serif;letter-spacing:-0.55px;">39.1700ns</div>
<div class="a t" style="left:538px;top:159px;font-size:12px;color:#000;font-weight:normal;font-family:'Liberation Sans', sans-serif;letter-spacing:-0.55px;">t2</div>
<div class="a t" style="left:568px;top:159px;font-size:12px;color:#000;font-weight:normal;font-family:'Liberation Sans', sans-serif;letter-spacing:-0.55px;">40.5600ns</div>
<div class="a t" style="left:539px;top:175px;font-size:12px;color:#000;font-weight:normal;font-family:'Liberation Sans', sans-serif;letter-spacing:-0.55px;">&#916;t</div>
<div class="a t" style="left:568px;top:175px;font-size:12px;color:#000;font-weight:normal;font-family:'Liberation Sans', sans-serif;letter-spacing:-0.55px;">1.39000ns</div>
<div class="a t" style="left:539px;top:191px;font-size:12px;color:#000;font-weight:normal;font-family:'Liberation Sans', sans-serif;letter-spacing:-0.55px;">1/&#916;t</div>
<div class="a t" style="left:568px;top:191px;font-size:12px;color:#000;font-weight:normal;font-family:'Liberation Sans', sans-serif;letter-spacing:-0.55px;">719.424MHz</div>
<div class="a" style="left:6px;top:456px;width:638px;height:1px;background:#808080;"></div>
<div class="a" style="left:6px;top:457px;width:638px;height:1px;background:#fff;"></div>
<div class="a rb" style="left:6px;top:459px;width:44px;height:22px;background:#c0c0c0"></div>
<div class="a" style="left:7px;top:461px;width:5px;height:19px;background:#ff30ff;"></div>
<div class="a t" style="left:15px;top:465px;font-size:12px;color:#000;font-weight:normal;font-family:'Liberation Sans', sans-serif;letter-spacing:-0.55px;">C3</div>
<svg class="a" style="left:35px;top:467px" width="10" height="5"><path d="M0 5H10L5 0Z" fill="#000"/></svg>
<div class="a sk" style="left:67px;top:459px;width:82px;height:23px;background:#fff"></div>
<div class="a t" style="left:70px;top:464px;font-size:12px;color:#000;font-weight:normal;font-family:'Liberation Sans', sans-serif;letter-spacing:-0.55px;">20.00&#937;/di</div>
<div class="a rb" style="left:117px;top:461px;width:15px;height:19px;background:#c0c0c0"></div>
<div class="a rb" style="left:132px;top:461px;width:15px;height:9px;background:#c0c0c0"></div>
<div class="a rb" style="left:132px;top:470px;width:15px;height:10px;background:#c0c0c0"></div>
<div class="a sk" style="left:152px;top:459px;width:82px;height:23px;background:#c0c0c0"></div>
<div class="a t" style="left:155px;top:464px;font-size:12px;color:#808080;font-weight:normal;font-family:'Liberation Sans', sans-serif;letter-spacing:-0.55px;text-shadow:1px 1px #fff;-webkit-text-stroke:0;">0.0&#937;</div>
<div class="a rb" style="left:202px;top:461px;width:15px;height:19px;background:#c0c0c0"></div>
<div class="a rb" style="left:217px;top:461px;width:15px;height:9px;background:#c0c0c0"></div>
<div class="a rb" style="left:217px;top:470px;width:15px;height:10px;background:#c0c0c0"></div>
<div class="a pb" style="left:253px;top:459px;width:30px;height:23px;background:#fff"></div>
<div class="a t" style="left:257px;top:465px;font-size:12px;color:#000;font-weight:normal;font-family:'Liberation Sans', sans-serif;letter-spacing:-0.55px;">Main</div>
<div class="a rb" style="left:284px;top:459px;width:29px;height:22px;background:#c0c0c0"></div>
<div class="a rb" style="left:313px;top:459px;width:30px;height:22px;background:#c0c0c0"></div>
<div class="a sk" style="left:361px;top:459px;width:88px;height:23px;background:#fff"></div>
<div class="a t" style="left:364px;top:464px;font-size:12px;color:#000;font-weight:normal;font-family:'Liberation Sans', sans-serif;letter-spacing:-0.55px;">500.000ps</div>
<div class="a rb" style="left:417px;top:461px;width:15px;height:19px;background:#c0c0c0"></div>
<div class="a rb" style="left:432px;top:461px;width:15px;height:9px;background:#c0c0c0"></div>
<div class="a rb" style="left:432px;top:470px;width:15px;height:10px;background:#c0c0c0"></div>
<div class="a sk" style="left:452px;top:459px;width:80px;height:23px;background:#fff"></div>
<div class="a t" style="left:455px;top:464px;font-size:12px;color:#000;font-weight:normal;font-family:'Liberation Sans', sans-serif;letter-spacing:-0.55px;">37.450n</div>
<div class="a rb" style="left:500px;top:461px;width:15px;height:19px;background:#c0c0c0"></div>
<div class="a rb" style="left:515px;top:461px;width:15px;height:9px;background:#c0c0c0"></div>
<div class="a rb" style="left:515px;top:470px;width:15px;height:10px;background:#c0c0c0"></div>
<div class="a sk1" style="left:533px;top:459px;width:111px;height:23px;background:#c0c0c0"></div>
<svg class="a" style="left:11px;top:29px" width="23" height="22" shape-rendering="crispEdges"><path d="M8.5 3.5H16.5L14.5 8.5H6.5Z" fill="#fff" stroke="#000"/><path d="M9 5.5H14M8 7H13" stroke="#000"/><path d="M5.5 9.5H17.5L18.5 10.5V15.5L17.5 16.5H5.5L3.5 14.5V11.5Z" fill="#c0c0c0" stroke="#000"/><path d="M5 10.5H17" stroke="#fff"/><path d="M4 12.5H18" stroke="#000"/><path d="M5 13.5H17" stroke="#e8e8e8"/><path d="M10 13.5H13" stroke="#ff0" /><path d="M5 15.5H16" stroke="#fff"/><path d="M16 9h1v1h-1zM17 10h1v1h-1zM16 11h1v1h-1zM17 14h1v1h-1z" fill="#fff"/></svg>
<svg class="a" style="left:34px;top:29px" width="23" height="22"><path d="M4 6H6V4H8V8L7 9H4Z" fill="#000"/><path d="M8.5 8.5L16.5 16.5" stroke="#000" stroke-width="2.4"/><path d="M8.5 8.5L16.5 16.5" stroke="#fff" stroke-width="1" stroke-dasharray="1 1.4"/><path d="M13.5 9.5L6.5 16.5" stroke="#000" stroke-width="2.4"/><path d="M13.5 9.5L6.5 16.5" stroke="#c00" stroke-width="1" stroke-dasharray="1 1.4"/><path d="M10.5 5.5L12.5 4.5L15.5 5L19 9L18.5 11.5L17 11L14 8L11 7Z" fill="#a8a800" stroke="#000" stroke-width="1"/></svg>
<svg class="a" style="left:57px;top:29px" width="23" height="22"><path d="M13.8 6.8Q13 5.3 11.5 5.6Q10.3 5.9 9.8 8.5L8.6 13.5Q8 16.3 5.2 16.8" fill="none" stroke="#000" stroke-width="2"/><path d="M7 8.6H12" stroke="#000" stroke-width="1.4"/><path d="M10.8 11.6Q12.5 11.4 13.6 13Q14.6 14.6 17 14.4M10.8 14.4Q12.5 14.6 13.6 13Q14.6 11.4 17 11.6" fill="none" stroke="#000" stroke-width="1.7"/></svg>
<svg class="a" style="left:80px;top:29px" width="23" height="22"><defs><clipPath id="rbc"><rect x="3" y="2" width="17" height="17"/></clipPath></defs><g clip-path="url(#rbc)"><path d="M1 7L7 13.5L12 7.5L17 13.5L22 8" fill="none" stroke="#ffff00" stroke-width="6.6" stroke-linejoin="miter"/><path d="M1 7L7 13.5L12 7.5L17 13.5L22 8" fill="none" stroke="#ff0000" stroke-width="4.8" stroke-linejoin="miter"/><path d="M1 7L7 13.5L12 7.5L17 13.5L22 8" fill="none" stroke="#ff40ff" stroke-width="3.2" stroke-linejoin="miter"/><path d="M1 7L7 13.5L12 7.5L17 13.5L22 8" fill="none" stroke="#0000ff" stroke-width="1.6" stroke-linejoin="miter"/></g></svg>
<svg class="a" style="left:103px;top:29px" width="23" height="22" shape-rendering="crispEdges"><path d="M3 3H7V5H5V7H3Z M19 3H15V5H17V7H19Z M3 18H7V16H5V14H3Z M19 18H15V16H17V14H19Z" fill="#000"/><path d="M6.8 13V7H11V14H15V8" fill="none" stroke="#0000ff" stroke-width="2"/></svg>
<svg class="a" style="left:126px;top:29px" width="23" height="22"><path d="M11 7.5Q10.5 6 8.5 6H7.5Q5 6 5 8.5V13.5Q5 16 7.5 16H8.5Q10.5 16 11 14.5" fill="none" stroke="#000" stroke-width="1.8"/></svg>
<svg class="a" style="left:470px;top:29px" width="27" height="21" shape-rendering="crispEdges"><path d="M4 14.5H8L15 7.5H23" fill="none" stroke="#fff"/><path d="M4 15.5H9L16 8.5H23" fill="none" stroke="#000"/></svg>
<svg class="a" style="left:551px;top:30px" width="15" height="19"><rect x="3.5" y="4.5" width="8" height="9" fill="none" stroke="#000" stroke-width="1.3"/><rect x="5.5" y="6.5" width="4" height="2" fill="none" stroke="#000"/><path d="M6.5 10.5L6 12M9.5 10.5L9 12" stroke="#000" stroke-width="1.2"/></svg>
<svg class="a" style="left:572px;top:34px" width="6" height="4" shape-rendering="crispEdges"><path d="M2 1h1v1h1v1h-3v-1h1z" fill="#fff"/><path d="M1 0h1v1h1v1h-3v-1h1z" fill="#808080"/></svg>
<svg class="a" style="left:572px;top:42px" width="6" height="4" shape-rendering="crispEdges"><path d="M1 1h3v1h-1v1h-1z" fill="#fff"/><path d="M0 0h3v1h-1v1h-1z" fill="#808080"/></svg>
<svg class="a" style="left:617px;top:29px" width="23" height="23"><path d="M3.5 4.5V16.5L6.5 13.5L9 18.5L10.5 17.5L8.5 12.5H12.5Z" fill="#000"/></svg>
<svg class="a" style="left:617px;top:29px" width="23" height="23"><path d="M11.3 8.5Q11.5 5 15 5Q18.7 5 18.7 8Q18.7 10.3 15.7 11.3V13.3" fill="none" stroke="#000080" stroke-width="2.2"/><rect x="14.5" y="14" width="2.5" height="2.2" fill="#000080"/></svg>
<svg class="a" style="left:117px;top:461px" width="15" height="19"><rect x="3.5" y="4.5" width="8" height="9" fill="none" stroke="#000" stroke-width="1.3"/><rect x="5.5" y="6.5" width="4" height="2" fill="none" stroke="#000"/><path d="M6.5 10.5L6 12M9.5 10.5L9 12" stroke="#000" stroke-width="1.2"/></svg>
<svg class="a" style="left:138px;top:465px" width="6" height="4" shape-rendering="crispEdges"><path d="M1 0h1v1h1v1h-3v-1h1z" fill="#000"/></svg>
<svg class="a" style="left:138px;top:474px" width="6" height="4" shape-rendering="crispEdges"><path d="M0 0h3v1h-1v1h-1z" fill="#000"/></svg>
<svg class="a" style="left:202px;top:461px" width="15" height="19"><rect x="3.5" y="4.5" width="8" height="9" fill="none" stroke="#000" stroke-width="1.3"/><rect x="5.5" y="6.5" width="4" height="2" fill="none" stroke="#000"/><path d="M6.5 10.5L6 12M9.5 10.5L9 12" stroke="#000" stroke-width="1.2"/></svg>
<svg class="a" style="left:223px;top:465px" width="6" height="4" shape-rendering="crispEdges"><path d="M2 1h1v1h1v1h-3v-1h1z" fill="#fff"/><path d="M1 0h1v1h1v1h-3v-1h1z" fill="#808080"/></svg>
<svg class="a" style="left:223px;top:474px" width="6" height="4" shape-rendering="crispEdges"><path d="M1 1h3v1h-1v1h-1z" fill="#fff"/><path d="M0 0h3v1h-1v1h-1z" fill="#808080"/></svg>
<svg class="a" style="left:417px;top:461px" width="15" height="19"><rect x="3.5" y="4.5" width="8" height="9" fill="none" stroke="#000" stroke-width="1.3"/><rect x="5.5" y="6.5" width="4" height="2" fill="none" stroke="#000"/><path d="M6.5 10.5L6 12M9.5 10.5L9 12" stroke="#000" stroke-width="1.2"/></svg>
<svg class="a" style="left:438px;top:465px" width="6" height="4" shape-rendering="crispEdges"><path d="M1 0h1v1h1v1h-3v-1h1z" fill="#000"/></svg>
<svg class="a" style="left:438px;top:474px" width="6" height="4" shape-rendering="crispEdges"><path d="M0 0h3v1h-1v1h-1z" fill="#000"/></svg>
<svg class="a" style="left:500px;top:461px" width="15" height="19"><rect x="3.5" y="4.5" width="8" height="9" fill="none" stroke="#000" stroke-width="1.3"/><rect x="5.5" y="6.5" width="4" height="2" fill="none" stroke="#000"/><path d="M6.5 10.5L6 12M9.5 10.5L9 12" stroke="#000" stroke-width="1.2"/></svg>
<svg class="a" style="left:521px;top:465px" width="6" height="4" shape-rendering="crispEdges"><path d="M1 0h1v1h1v1h-3v-1h1z" fill="#000"/></svg>
<svg class="a" style="left:521px;top:474px" width="6" height="4" shape-rendering="crispEdges"><path d="M0 0h3v1h-1v1h-1z" fill="#000"/></svg>
<svg class="a" style="left:284px;top:459px" width="29" height="22"><circle cx="12" cy="9.5" r="5.3" fill="none" stroke="#000" stroke-width="1.6"/><path d="M15.5 13L20.5 18" stroke="#000" stroke-width="2.6"/><path d="M16 12.5L21 17.5" stroke="#fff" stroke-width="0.6" opacity="0.6"/><text x="9.3" y="13.3" font-family="Liberation Sans" font-weight="bold" font-size="10">1</text></svg>
<svg class="a" style="left:313px;top:459px" width="29" height="22"><circle cx="12" cy="9.5" r="5.3" fill="none" stroke="#000" stroke-width="1.6"/><path d="M15.5 13L20.5 18" stroke="#000" stroke-width="2.6"/><path d="M16 12.5L21 17.5" stroke="#fff" stroke-width="0.6" opacity="0.6"/><text x="9.3" y="13.3" font-family="Liberation Sans" font-weight="bold" font-size="10">2</text></svg>
<svg class="a" style="left:145px;top:59px" width="23" height="22"><path d="M3 15.5H7L14 7.5H18" fill="none" stroke="#000080" stroke-width="1.6"/><path d="M5 13.5H11M8 9.5H14" fill="none" stroke="#00ff00" stroke-width="1.5"/></svg>
<svg class="a" style="left:168px;top:59px" width="23" height="22"><path d="M3 7.5H7L14 15.5H18" fill="none" stroke="#000080" stroke-width="1.6"/><path d="M5 9.5H11M8 13.5H14" fill="none" stroke="#00ff00" stroke-width="1.5"/></svg>
<svg class="a" style="left:191px;top:59px" width="23" height="22"><path d="M3 3V8M3 3.5H5V5.5H3" fill="none" stroke="#000080" stroke-width="1.3"/><path d="M7 6V3.5H15V6" fill="none" stroke="#00ff00" stroke-width="1.6"/><path d="M4 16.5H7.5V9.5H11.5V16.5H15.5V9.5H18" fill="none" stroke="#000080" stroke-width="1.6"/><path d="M6 11L9 13M14 11L17 13" fill="none" stroke="#00ff00" stroke-width="1.5"/></svg>
<svg class="a" style="left:214px;top:59px" width="23" height="22"><path d="M3 3V8M3 3.5H5.5M3 5.5H5" fill="none" stroke="#000080" stroke-width="1.3"/><path d="M7 6V3.5H15V6" fill="none" stroke="#00ff00" stroke-width="1.6"/><path d="M4 16.5H7.5V9.5H11.5V16.5H15.5V9.5H18" fill="none" stroke="#000080" stroke-width="1.6"/><path d="M6 11L9 13M14 11L17 13" fill="none" stroke="#00ff00" stroke-width="1.5"/></svg>
<svg class="a" style="left:237px;top:59px" width="23" height="22"><path d="M3 16.5H5L15 7.5H18" fill="none" stroke="#000080" stroke-width="1.6"/><path d="M8 10L12 14M8 14L12 10" fill="none" stroke="#00ff00" stroke-width="1.2"/></svg>
<svg class="a" style="left:260px;top:59px" width="23" height="22"><path d="M3 7.5H5L15 16.5H18" fill="none" stroke="#000080" stroke-width="1.6"/><path d="M8 10L12 14M8 14L12 10" fill="none" stroke="#00ff00" stroke-width="1.2"/></svg>
<svg class="a" style="left:283px;top:59px" width="23" height="22"><path d="M7.5 6.5V4H14.5V6.5" fill="none" stroke="#00ff00" stroke-width="1.6"/><path d="M3 16.5H7.5V9.5H14.5V16.5H18" fill="none" stroke="#000080" stroke-width="1.6"/><path d="M6 11L9 13M13 11L16 13" fill="none" stroke="#00ff00" stroke-width="1.5"/></svg>
<svg class="a" style="left:306px;top:59px" width="23" height="22"><path d="M7.5 6.5V4H14.5V6.5" fill="none" stroke="#00ff00" stroke-width="1.6"/><path d="M3 9.5H7.5V15.5H15.5V9.5H18" fill="none" stroke="#000080" stroke-width="1.6"/><path d="M6 10.5L9 12.5M14 10.5L17 12.5" fill="none" stroke="#00ff00" stroke-width="1.5"/></svg>
<svg class="a" style="left:329px;top:59px" width="23" height="22"><path d="M6 6.5V4H10.5V6.5" fill="none" stroke="#00ff00" stroke-width="1.6"/><path d="M3 15.5H6.5V9.5H10.5V15.5H17V9.5H19" fill="none" stroke="#000080" stroke-width="1.6"/><path d="M5 11L8 13M9 11L12 13" fill="none" stroke="#00ff00" stroke-width="1.5"/></svg>
<svg class="a" style="left:352px;top:59px" width="23" height="22"><path d="M9 6.5V4H15.5V6.5" fill="none" stroke="#00ff00" stroke-width="1.6"/><path d="M3 15.5H7.5V9.5H11.5V15.5H15.5V9.5H19" fill="none" stroke="#000080" stroke-width="1.6"/><path d="M6 11L9 13M14 11L17 13" fill="none" stroke="#00ff00" stroke-width="1.5"/></svg>
<svg class="a" style="left:375px;top:59px" width="23" height="22"><path d="M5 7V4H16V7" fill="none" stroke="#00ff00" stroke-width="1.6"/><path d="M3.5 15.5V9.5H6V15.5H8.5V9.5H11V15.5H13.5V9.5H16V15.5H18" fill="none" stroke="#000080" stroke-width="1.6"/><path d="M3 11L6 13M14 11L17 13" fill="none" stroke="#00ff00" stroke-width="1.5"/></svg>
<svg class="a" style="left:398px;top:59px" width="23" height="22"><path d="M2.5 16.5H5.5L7 11L9 3.5L10.5 6.5H12L13.5 15.5L14.5 17L16 15.5H19" fill="none" stroke="#000" stroke-width="2"/><path d="M2.5 16.5H5.5L7 11L9 3.5L10.5 6.5H12L13.5 15.5L14.5 17L16 15.5H19" fill="none" stroke="#00ff00" stroke-width="1.3"/><path d="M8.5 15H11.5L10 17Z" fill="#000"/></svg>
<svg class="a" style="left:421px;top:59px" width="23" height="22"><path d="M2.5 16.5H5.5L7 11L9 3.5L10.5 6.5H12L13.5 15.5L14.5 17L16 15.5H19" fill="none" stroke="#000" stroke-width="2"/><path d="M2.5 16.5H5.5L7 11L9 3.5L10.5 6.5H12L13.5 15.5L14.5 17L16 15.5H19" fill="none" stroke="#00ff00" stroke-width="1.3"/></svg>
<svg class="a" style="left:444px;top:59px" width="23" height="22"><path d="M7 6.5V4H15V6.5" fill="none" stroke="#00ff00" stroke-width="1.6"/><path d="M2.5 14.5H7.5V9.5H18.5M15.5 11.5H18.5V11.5M15.5 11.5V16.5M2.5 16.5H15.5" fill="none" stroke="#000080" stroke-width="1.5"/><path d="M6 12L9 14M14 12L17 14" fill="none" stroke="#00ff00" stroke-width="1.5"/></svg>
<svg class="a" style="left:532px;top:57px" width="23" height="22" shape-rendering="crispEdges"><rect x="5" y="10" width="14" height="1" fill="#808080"/><rect x="4" y="9" width="15" height="1" fill="#f00"/><path d="M5 15h2v1h-2zM8 15h2v1h-2zM11 15h2v1h-2zM14 15h2v1h-2zM17 15h2v1h-2z" fill="#808080"/><path d="M4 14h2v1h-2zM7 14h2v1h-2zM10 14h2v1h-2zM13 14h2v1h-2zM16 14h2v1h-2z" fill="#f00"/></svg>
<svg class="a" style="left:555px;top:57px" width="23" height="22"><path d="M3.8 9.5L6 13.5Q7.2 15.5 8.5 13.8L11 7.5Q12.5 5 14 7.5L16.5 13.5Q17.5 15.3 19.5 14" fill="none" stroke="#000080" stroke-width="1.7"/></svg>
<svg class="a" style="left:578px;top:57px" width="23" height="22"><rect x="2" y="6" width="18" height="11" fill="#ffff00"/><path d="M2 6.5H20M2 16.5H20" stroke="#000" stroke-dasharray="1 1"/><text x="5" y="14" font-family="Liberation Sans" font-size="7" fill="#000">1</text><text x="9.5" y="14" font-family="Liberation Sans" font-size="7" fill="#000">2</text><text x="14" y="14" font-family="Liberation Sans" font-size="7" fill="#000">3</text></svg>
<svg class="a" style="left:601px;top:57px" width="23" height="22" shape-rendering="crispEdges"><g fill="#000080"><rect x="3" y="13" width="1" height="3"/><rect x="4" y="11" width="1" height="5"/><rect x="5" y="12" width="1" height="4"/><rect x="6" y="10" width="1" height="6"/><rect x="7" y="11" width="1" height="5"/><rect x="8" y="8" width="1" height="8"/><rect x="9" y="9" width="1" height="7"/><rect x="10" y="7" width="1" height="9"/><rect x="11" y="8" width="1" height="8"/><rect x="12" y="5" width="1" height="11"/><rect x="13" y="6" width="1" height="10"/><rect x="14" y="7" width="1" height="9"/><rect x="15" y="9" width="1" height="7"/><rect x="16" y="8" width="1" height="8"/><rect x="17" y="10" width="1" height="6"/><rect x="18" y="11" width="1" height="5"/><rect x="19" y="13" width="1" height="3"/></g></svg>
<svg class="a" style="left:624px;top:57px" width="20" height="22"><path d="M6.5 3.5V5.5H15V3.5M6.5 18V16H15V18" fill="none" stroke="#000080" stroke-width="1.5"/><ellipse cx="10.8" cy="10.8" rx="4.2" ry="2.5" fill="none" stroke="#000080" stroke-width="1.5"/></svg>
</body></html>
